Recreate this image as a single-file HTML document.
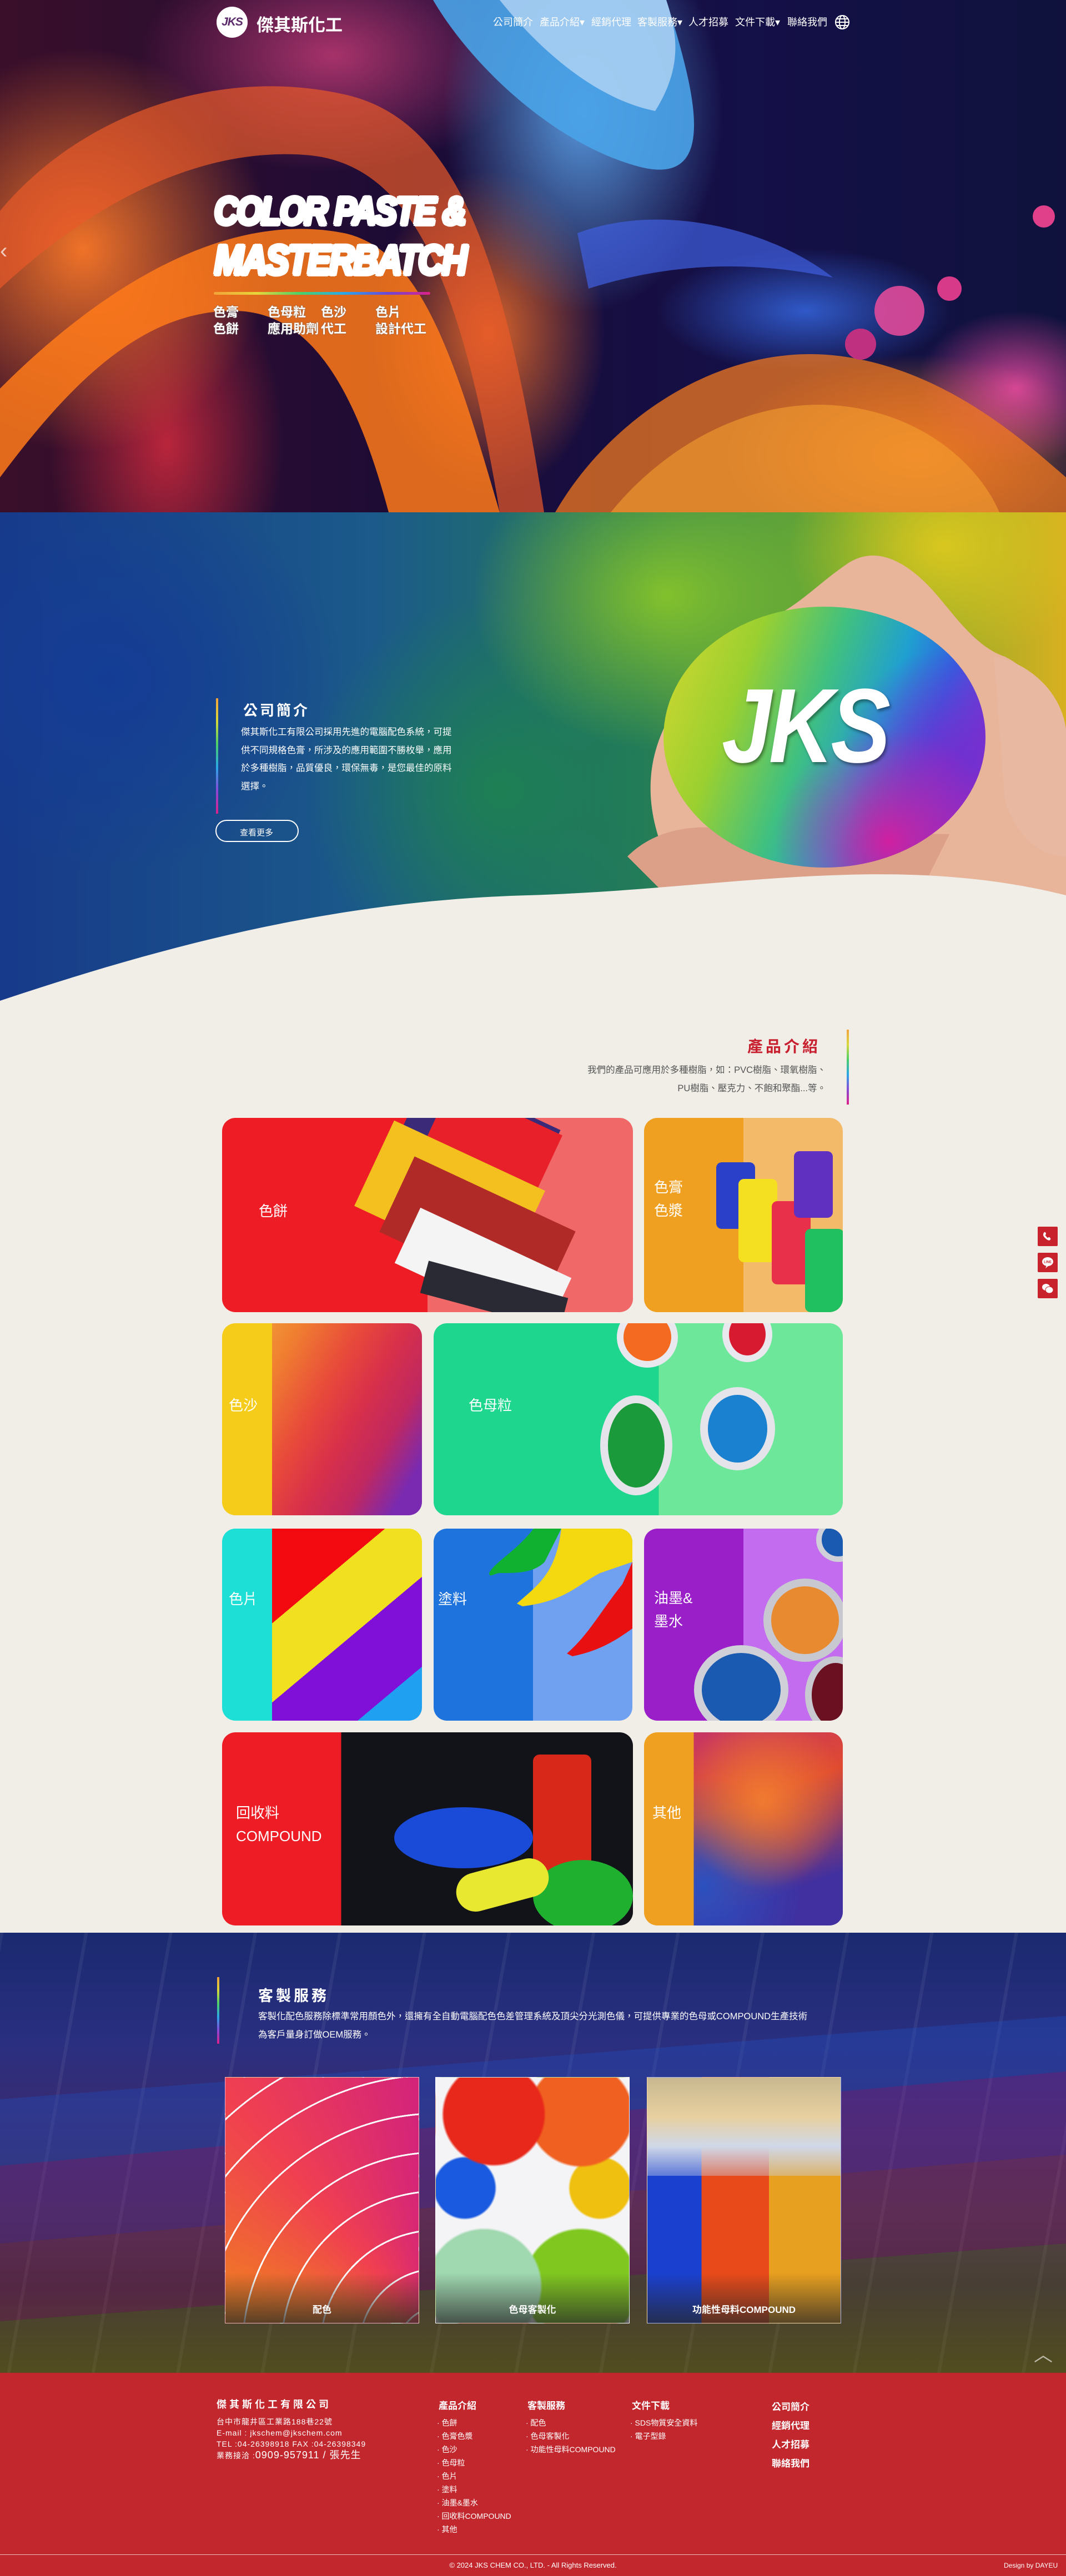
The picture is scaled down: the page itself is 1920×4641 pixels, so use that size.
<!DOCTYPE html>
<html><head><meta charset="utf-8">
<style>
*{margin:0;padding:0;box-sizing:border-box}
body{width:1920px;height:4641px;position:relative;overflow:hidden;background:#f1eee8;font-family:"Liberation Sans","Noto Sans CJK TC",sans-serif;color:#fff}
.abs{position:absolute}
#hero{left:0;top:0;width:1920px;height:923px;overflow:hidden;
background:
radial-gradient(ellipse 260px 200px at 1830px 700px,rgba(255,80,170,.8),transparent 70%),
radial-gradient(ellipse 500px 260px at 1650px 820px,rgba(255,140,40,.85),transparent 70%),
radial-gradient(ellipse 380px 160px at 1450px 560px,rgba(60,120,255,.7),transparent 70%),
radial-gradient(ellipse 360px 520px at 1050px 200px,rgba(90,160,230,.95),transparent 70%),
radial-gradient(ellipse 300px 420px at 880px 600px,rgba(240,110,40,.9),transparent 70%),
radial-gradient(ellipse 480px 520px at 150px 450px,rgba(250,120,40,.95),transparent 70%),
radial-gradient(ellipse 300px 500px at 300px 800px,rgba(200,40,60,.9),transparent 70%),
radial-gradient(ellipse 500px 300px at 600px 100px,rgba(200,60,120,.8),transparent 70%),
linear-gradient(90deg,#3a0f2a 0%,#1b0b36 40%,#141048 70%,#10123d 100%)}
.nav{top:0;left:0;width:1920px;height:80px}
.nav a{position:absolute;top:26px;font-size:18px;color:#fff;white-space:nowrap}
.rb{background:linear-gradient(90deg,#f4a33a,#e6d63a,#4ad06a,#2aa8e8,#6a48d8,#e0208a)}
.rbv{background:linear-gradient(180deg,#f4a33a,#d8d83a,#4ad06a,#2aa8e8,#8a48d8,#e0208a)}
.big{font-family:"Liberation Sans",sans-serif;font-weight:900;font-style:italic;font-size:70px;letter-spacing:-3px;line-height:1;transform:scaleX(.85);transform-origin:left;
-webkit-text-stroke:0;text-shadow:0 0 0 #fff,3px 3px 0 #fff,-3px -3px 0 #fff,3px -3px 0 #fff,-3px 3px 0 #fff,0 4px 0 #fff,4px 0 0 #fff,-4px 0 0 #fff,0 -4px 0 #fff}
.cn{font-size:23px;font-weight:bold;color:#fff;text-shadow:0 0 2px #666}
#about{left:0;top:923px;width:1920px;height:920px;overflow:hidden;
background:
radial-gradient(ellipse 400px 300px at 1700px 60px,rgba(220,200,30,.95),transparent 70%),
radial-gradient(ellipse 500px 400px at 1200px 150px,rgba(140,200,40,.9),transparent 70%),
radial-gradient(ellipse 500px 500px at 900px 500px,rgba(30,130,80,.9),transparent 70%),
radial-gradient(ellipse 600px 500px at 200px 300px,rgba(20,60,150,.95),transparent 70%),
linear-gradient(90deg,#173a8a 0%,#1b5a8a 35%,#237a5a 60%,#6aa830 80%,#d8b020 100%)}
.tile{position:absolute;border-radius:24px;overflow:hidden}
.tile .t{position:absolute;font-size:26px;color:#fff;line-height:1.6}
#svc{left:0;top:3482px;width:1920px;height:793px;overflow:hidden;
background:
repeating-linear-gradient(100deg,rgba(255,255,255,.06) 0 6px,transparent 6px 150px),
linear-gradient(180deg,#1a2a70 0%,#2a2f80 25%,#3b2a6e 45%,#3a2c58 65%,#2a2440 80%,#3a3a20 100%)}
.card{position:absolute;top:3742px;width:350px;height:444px;overflow:hidden;border:1px solid rgba(255,255,255,.6)}
.card .cap{position:absolute;left:0;bottom:0;width:100%;height:90px;background:linear-gradient(180deg,transparent,rgba(40,40,40,.75));text-align:center;padding-top:52px;font-size:17px;font-weight:bold}
#foot{left:0;top:4275px;width:1920px;height:366px;background:#c1272d}
.fl{position:absolute;font-size:15px;color:#fff;line-height:24px}
.fh{font-size:17px;font-weight:bold}
.side{position:absolute;left:1869px;width:36px;height:35px;background:#c8232c;border-radius:2px}
</style></head><body>

<div id="hero" class="abs">
 <svg class="abs" style="left:0;top:0" width="1920" height="923">
  <path d="M0 700 C200 500 420 380 620 420 C760 450 820 650 900 923 L700 923 C640 700 560 560 420 560 C250 560 120 700 0 860Z" fill="#ff7a1a" opacity=".85"/>
  <path d="M0 380 C150 200 400 120 620 170 C800 210 900 400 980 923 L900 923 C830 500 740 300 560 280 C350 260 150 380 0 520Z" fill="#e85a2a" opacity=".7"/>
  <path d="M780 0 C850 120 1000 260 1150 300 C1300 340 1250 160 1200 0Z" fill="#4aa3e8" opacity=".9"/>
  <path d="M900 0 C980 100 1080 180 1180 200 C1230 120 1220 60 1200 0Z" fill="#b4d4f4" opacity=".8"/>
  <path d="M1000 923 C1100 750 1300 620 1500 640 C1700 660 1850 800 1920 860 L1920 923Z" fill="#f07820" opacity=".75"/>
  <path d="M1100 923 C1200 800 1350 720 1500 730 C1650 740 1760 830 1800 923Z" fill="#f5a030" opacity=".6"/>
  <path d="M1040 420 C1200 360 1400 420 1500 500 C1400 480 1250 460 1060 520Z" fill="#4060e0" opacity=".7"/>
  <circle cx="1620" cy="560" r="45" fill="#e04a9a" opacity=".9"/>
  <circle cx="1710" cy="520" r="22" fill="#d83a8a"/>
  <circle cx="1880" cy="390" r="20" fill="#e0408a"/>
  <circle cx="1550" cy="620" r="28" fill="#c03080"/>
 </svg>
 <div class="abs" style="left:0;top:430px;font-size:40px;color:rgba(255,255,255,.7)">‹</div>
 <div class="abs big" style="left:386px;top:345px;background:linear-gradient(90deg,#f04a4a,#f3a43a 18%,#e8e83a 30%,#3ae07a 45%,#3ad8c8 58%,#3a7ae8 72%,#9a3ae8 84%,#e83a9a);-webkit-background-clip:text;background-clip:text;color:transparent">COLOR PASTE &amp;</div>
 <div class="abs big" style="left:386px;top:432px;font-size:74px;background:linear-gradient(90deg,#f04a4a,#f3a43a 15%,#e8e83a 27%,#3ae07a 40%,#3ad8c8 53%,#3a7ae8 67%,#9a3ae8 80%,#e83a9a);-webkit-background-clip:text;background-clip:text;color:transparent">MASTERBATCH</div>
 <div class="abs rb" style="left:385px;top:526px;width:390px;height:5px;border-radius:3px"></div>
 <div class="abs cn" style="left:384px;top:547px;line-height:30px">色膏<br>色餅</div>
 <div class="abs cn" style="left:482px;top:547px;line-height:30px">色母粒<br>應用助劑</div>
 <div class="abs cn" style="left:578px;top:547px;line-height:30px">色沙<br>代工</div>
 <div class="abs cn" style="left:676px;top:547px;line-height:30px">色片<br>設計代工</div>
</div>

<div class="nav abs">
 <div class="abs" style="left:390px;top:12px;width:56px;height:56px;border-radius:50%;background:#fff;color:#5a2a6a;font-weight:900;font-style:italic;font-size:21px;text-align:center;line-height:56px;letter-spacing:-1px">JKS</div>
 <div class="abs" style="left:462px;top:20px;font-size:31px;font-weight:bold;color:#fff">傑其斯化工</div>
 <a style="left:888px">公司簡介</a>
 <a style="left:972px">產品介紹▾</a>
 <a style="left:1065px">經銷代理</a>
 <a style="left:1148px">客製服務▾</a>
 <a style="left:1240px">人才招募</a>
 <a style="left:1324px">文件下載▾</a>
 <a style="left:1418px">聯絡我們</a>
 <svg class="abs" style="left:1503px;top:26px" width="28" height="28" viewBox="0 0 28 28" fill="none" stroke="#fff" stroke-width="2"><circle cx="14" cy="14" r="12"/><ellipse cx="14" cy="14" rx="5" ry="12"/><path d="M2 14h24M4 8h20M4 20h20"/></svg>
</div>

<div id="about" class="abs">
 <svg class="abs" style="left:1110px;top:60px" width="810" height="640">
  <path d="M120 620 C60 520 40 420 90 320 C120 260 170 180 260 140 C330 110 360 70 420 30 C470 0 520 30 560 70 C600 110 640 180 700 200 C760 230 800 300 810 360 L810 640Z" fill="#e8b49a"/>
  <path d="M20 560 C60 520 120 500 200 510 L600 520 L560 600 L100 640Z" fill="#dca088"/>
  <path d="M680 200 C740 210 800 260 810 330 L810 560 C760 560 720 520 700 460Z" fill="#e9b8a0"/>
 </svg>
 <div class="abs" style="left:1195px;top:170px;width:580px;height:470px;border-radius:50%;
 background:radial-gradient(circle at 70% 90%,#d020a0,transparent 35%),radial-gradient(circle at 90% 60%,#7030d0,transparent 35%),linear-gradient(110deg,#d8d830 0%,#9ad030 25%,#40c080 45%,#20a0d0 62%,#3060e0 75%,#8030d0 88%,#d020a0 100%)"></div>
 <div class="abs" style="left:1300px;top:290px;font-size:190px;font-weight:900;font-style:italic;color:#fff;letter-spacing:-6px;line-height:1;transform:scaleX(.85);transform-origin:left;text-shadow:3px 4px 6px rgba(0,0,0,.4)">JKS</div>
 <svg class="abs" style="left:0;top:0" width="1920" height="920"><path d="M0 880 C300 780 600 700 950 690 C1300 680 1600 610 1920 690 L1920 920 L0 920Z" fill="#f1eee8"/></svg>
 <div class="abs rbv" style="left:389px;top:335px;width:4px;height:208px"></div>
 <div class="abs" style="left:438px;top:337px;font-size:26px;font-weight:bold;letter-spacing:4px">公司簡介</div>
 <div class="abs" style="left:434px;top:380px;width:394px;font-size:16.5px;line-height:32.5px">傑其斯化工有限公司採用先進的電腦配色系統，可提供不同規格色膏，所涉及的應用範圍不勝枚舉，應用於多種樹脂，品質優良，環保無毒，是您最佳的原料選擇。</div>
 <div class="abs" style="left:388px;top:554px;width:150px;height:40px;border:2px solid #fff;border-radius:20px;font-size:15px;padding:10px 0 0 42px">查看更多</div>
</div>

<div class="abs" style="left:1000px;top:1864px;width:478px;text-align:right;font-size:28px;font-weight:bold;color:#c8202e;letter-spacing:5px">產品介紹</div>
<div class="abs" style="left:900px;top:1912px;width:588px;text-align:right;font-size:16.5px;line-height:33px;color:#555">我們的產品可應用於多種樹脂，如：PVC樹脂、環氧樹脂、<br>PU樹脂、壓克力、不飽和聚酯...等。</div>
<div class="abs rbv" style="left:1525px;top:1855px;width:4px;height:135px"></div>

<!-- tiles -->
<div class="tile" style="left:400px;top:2014px;width:740px;height:350px;background:linear-gradient(90deg,#ee1c25 50%,#f06868 50%)">
 <div style="position:absolute;left:330px;top:-40px;width:260px;height:150px;background:#3a2a78;transform:rotate(25deg)"></div>
 <div style="position:absolute;left:380px;top:-20px;width:220px;height:110px;background:#e8202a;transform:rotate(25deg)"></div>
 <div style="position:absolute;left:260px;top:60px;width:300px;height:170px;background:#f4c020;transform:rotate(25deg)"></div>
 <div style="position:absolute;left:300px;top:130px;width:320px;height:150px;background:#b02a28;transform:rotate(25deg)"></div>
 <div style="position:absolute;left:320px;top:220px;width:300px;height:110px;background:#f4f4f4;transform:rotate(25deg)"></div>
 <div style="position:absolute;left:360px;top:290px;width:260px;height:60px;background:#2a2a34;transform:rotate(15deg)"></div>
 <div class="t" style="left:66px;top:148px">色餅</div></div>
<div class="tile" style="left:1160px;top:2014px;width:358px;height:350px;background:linear-gradient(90deg,#f0a020 50%,#f3ba6a 50%)">
 <div style="position:absolute;left:130px;top:80px;width:70px;height:120px;border-radius:10px;background:#2a40c8"></div>
 <div style="position:absolute;left:170px;top:110px;width:70px;height:150px;border-radius:10px;background:#f4e020"></div>
 <div style="position:absolute;left:230px;top:150px;width:70px;height:150px;border-radius:10px;background:#e8304a"></div>
 <div style="position:absolute;left:270px;top:60px;width:70px;height:120px;border-radius:10px;background:#6030c0"></div>
 <div style="position:absolute;left:290px;top:200px;width:70px;height:150px;border-radius:10px;background:#20c060"></div>
 <div class="t" style="left:18px;top:105px">色膏<br>色漿</div></div>
<div class="tile" style="left:400px;top:2384px;width:360px;height:346px;background:linear-gradient(90deg,#f5cc1a 25%,transparent 25%),linear-gradient(120deg,#f2b040 0%,#f08030 25%,#e84a3a 45%,#d8304a 60%,#c02860 75%,#7a2ab0 90%)">
 <div class="t" style="left:12px;top:128px">色沙</div></div>
<div class="tile" style="left:781px;top:2384px;width:737px;height:346px;background:linear-gradient(90deg,#1fd68f 55%,#6de79a 55%)">
 <div style="position:absolute;left:330px;top:-30px;width:110px;height:110px;border-radius:50%;background:#f46a20;border:12px solid #e8e8ee"></div>
 <div style="position:absolute;left:520px;top:-30px;width:90px;height:100px;border-radius:50%;background:#d81a30;border:12px solid #e8e8ee"></div>
 <div style="position:absolute;left:300px;top:130px;width:130px;height:180px;border-radius:50%;background:#1a9a3a;border:14px solid #e4e4ea"></div>
 <div style="position:absolute;left:480px;top:115px;width:135px;height:150px;border-radius:50%;background:#1a80d0;border:14px solid #e4e4ea"></div>
 <div class="t" style="left:63px;top:128px">色母粒</div></div>
<div class="tile" style="left:400px;top:2754px;width:360px;height:346px;background:linear-gradient(90deg,#1ddfd6 25%,transparent 25%),linear-gradient(140deg,#f20a10 0 38%,#f0e020 38% 60%,#8010d8 60% 85%,#20a0f0 85%)">
 <div class="t" style="left:12px;top:107px">色片</div></div>
<div class="tile" style="left:781px;top:2754px;width:358px;height:346px;background:linear-gradient(90deg,#1e74dc 50%,#70a0f0 50%)">
 <svg style="position:absolute;left:0;top:0" width="358" height="346"><path d="M180 0 L230 0 L200 60 C180 80 150 80 120 80 C110 80 100 90 100 80 C110 60 150 40 180 0Z" fill="#10b030"/><path d="M230 0 L358 0 L358 60 L300 80 C260 100 240 130 160 140 L150 135 C190 100 220 80 230 0Z" fill="#f4d810"/><path d="M358 60 L358 180 C330 200 300 220 250 230 L240 225 C280 190 300 150 340 100Z" fill="#e81010"/></svg>
 <div class="t" style="left:8px;top:107px">塗料</div></div>
<div class="tile" style="left:1160px;top:2754px;width:358px;height:346px;background:linear-gradient(90deg,#9b1fc9 50%,#c46cf0 50%)">
 <div style="position:absolute;left:215px;top:90px;width:150px;height:150px;border-radius:50%;background:#e88a30;border:14px solid #c8c8d0"></div>
 <div style="position:absolute;left:90px;top:210px;width:170px;height:160px;border-radius:50%;background:#1a5ab0;border:14px solid #d0d0d8"></div>
 <div style="position:absolute;left:290px;top:230px;width:110px;height:140px;border-radius:50%;background:#6a1020;border:12px solid #c8c8d0"></div>
 <div style="position:absolute;left:310px;top:-20px;width:80px;height:80px;border-radius:50%;background:#1a5ab0;border:10px solid #d0d0d8"></div>
 <div class="t" style="left:18px;top:105px">油墨&amp;<br>墨水</div></div>
<div class="tile" style="left:400px;top:3121px;width:740px;height:348px;background:linear-gradient(90deg,#ee1c25 29%,#111318 29%)">
 <div style="position:absolute;left:310px;top:135px;width:250px;height:110px;border-radius:50%;background:#1a4ad8"></div>
 <div style="position:absolute;left:560px;top:40px;width:105px;height:210px;border-radius:12px;background:#d8281a"></div>
 <div style="position:absolute;left:560px;top:230px;width:180px;height:130px;border-radius:50%;background:#20b030"></div>
 <div style="position:absolute;left:420px;top:240px;width:170px;height:70px;background:#e8e830;border-radius:40px;transform:rotate(-15deg)"></div>
 <div class="t" style="left:25px;top:125px">回收料<br>COMPOUND</div></div>
<div class="tile" style="left:1160px;top:3121px;width:358px;height:348px;background:linear-gradient(90deg,#f0a020 25%,transparent 25%),radial-gradient(ellipse at 60% 35%,#f07a30,transparent 50%),radial-gradient(ellipse at 30% 80%,#2a50c0,transparent 50%),linear-gradient(160deg,#c03070,#e04a30 40%,#4030a0 80%)">
 <div class="t" style="left:15px;top:125px">其他</div></div>

<div class="abs" style="left:1862px;top:2200px;width:0"></div>
<div class="side" style="top:2210px"><svg width="36" height="35" viewBox="0 0 36 35"><path d="M12 10c2-1 3 2 3 3s-2 2-1 3 3 4 4 4 2-2 3-1 3 2 2 4-3 2-5 1-8-6-8-9 1-4 2-5z" fill="#fff"/></svg></div>
<div class="side" style="top:2257px"><svg width="36" height="35" viewBox="0 0 36 35"><ellipse cx="18" cy="16" rx="10" ry="8" fill="#fff"/><path d="M16 23l-2 5 6-5z" fill="#fff"/><text x="18" y="18.5" font-size="6" fill="#c8232c" text-anchor="middle" font-weight="bold" font-family="Liberation Sans">LINE</text></svg></div>
<div class="side" style="top:2304px"><svg width="36" height="35" viewBox="0 0 36 35"><ellipse cx="15" cy="15" rx="7" ry="6" fill="#fff"/><ellipse cx="21" cy="20" rx="7" ry="6" fill="#fff" stroke="#c8232c"/></svg></div>

<div id="svc" class="abs">
 <svg class="abs" style="left:0;top:0" width="1920" height="793" opacity=".35">
  <path d="M0 300 L1920 150 L1920 250 L0 420Z" fill="#2050c0"/>
  <path d="M0 420 L1920 250 L1920 400 L0 560Z" fill="#7a2a90"/>
  <path d="M0 560 L1920 400 L1920 560 L0 700Z" fill="#a03050"/>
  <path d="M0 700 L1920 560 L1920 793 L0 793Z" fill="#807020"/>
 </svg>
 <div class="abs rbv" style="left:391px;top:80px;width:4px;height:120px"></div>
 <div class="abs" style="left:465px;top:92px;font-size:27px;font-weight:bold;letter-spacing:5px">客製服務</div>
 <div class="abs" style="left:465px;top:135px;width:1000px;font-size:16.5px;line-height:33px">客製化配色服務除標準常用顏色外，還擁有全自動電腦配色色差管理系統及頂尖分光測色儀，可提供專業的色母或COMPOUND生產技術為客戶量身訂做OEM服務。</div>
</div>
<div class="card" style="left:405px;background:repeating-radial-gradient(circle at 110% 110%,#fff 0 3px,transparent 3px 70px),conic-gradient(from 200deg at 110% 110%,#f0e080,#f8c020,#f08020,#f04050,#d02080,#a030c0,#3050d0,#20a0e0,#20c060,#80d040)"><div class="cap">配色</div></div>
<div class="card" style="left:784px;background:radial-gradient(circle at 30% 15%,#e8281a 0 20%,transparent 21%),radial-gradient(circle at 75% 15%,#f06020 0 20%,transparent 21%),radial-gradient(circle at 15% 45%,#1a5ae0 0 14%,transparent 15%),radial-gradient(circle at 85% 45%,#f0c010 0 14%,transparent 15%),radial-gradient(circle at 25% 85%,#a0d8b0 0 22%,transparent 23%),radial-gradient(circle at 75% 85%,#80c820 0 22%,transparent 23%),#f4f4f6"><div class="cap">色母客製化</div></div>
<div class="card" style="left:1165px;background:linear-gradient(180deg,transparent 0 30%,transparent 30%),linear-gradient(90deg,#1a40d0 0 28%,#e84a1a 28% 63%,#e8a020 63%);"><div style="position:absolute;left:0;top:0;width:100%;height:40%;background:linear-gradient(180deg,#c8b890,#e8d0a0 40%,#d0d8e8 70%,rgba(200,210,230,.4))"></div><div class="cap">功能性母料COMPOUND</div></div>

<div id="foot" class="abs">
 <div class="fl" style="left:390px;top:45px;font-size:18px;font-weight:bold;letter-spacing:5px">傑其斯化工有限公司</div>
 <div class="fl" style="left:390px;top:78px;font-size:14px;line-height:20px;letter-spacing:1px">台中市龍井區工業路188巷22號<br>E-mail : jkschem@jkschem.com<br>TEL :04-26398918 FAX :04-26398349<br>業務接洽 :<span style="font-size:18px">0909-957911 / 張先生</span></div>
 <div class="fl fh" style="left:790px;top:48px">產品介紹</div>
 <div class="fl" style="left:787px;top:78px;line-height:24px;font-size:14px">· 色餅<br>· 色膏色漿<br>· 色沙<br>· 色母粒<br>· 色片<br>· 塗料<br>· 油墨&amp;墨水<br>· 回收料COMPOUND<br>· 其他</div>
 <div class="fl fh" style="left:950px;top:48px">客製服務</div>
 <div class="fl" style="left:947px;top:78px;line-height:24px;font-size:14px">· 配色<br>· 色母客製化<br>· 功能性母料COMPOUND</div>
 <div class="fl fh" style="left:1138px;top:48px">文件下載</div>
 <div class="fl" style="left:1135px;top:78px;line-height:24px;font-size:14px">· SDS物質安全資料<br>· 電子型錄</div>
 <div class="fl fh" style="left:1390px;top:45px;line-height:34px">公司簡介<br>經銷代理<br>人才招募<br>聯絡我們</div>
 <div class="abs" style="left:0;top:327px;width:1920px;height:1px;background:rgba(255,255,255,.7)"></div>
 <div class="fl" style="left:0;top:335px;width:1920px;text-align:center;font-size:13px">© 2024 JKS CHEM CO., LTD. - All Rights Reserved.</div>
 <div class="fl" style="left:1808px;top:335px;font-size:12px">Design by DAYEU</div>
 <div class="abs" style="left:1862px;top:-60px;font-size:34px;color:rgba(255,255,255,.6)">︿</div>
</div>
</body></html>
